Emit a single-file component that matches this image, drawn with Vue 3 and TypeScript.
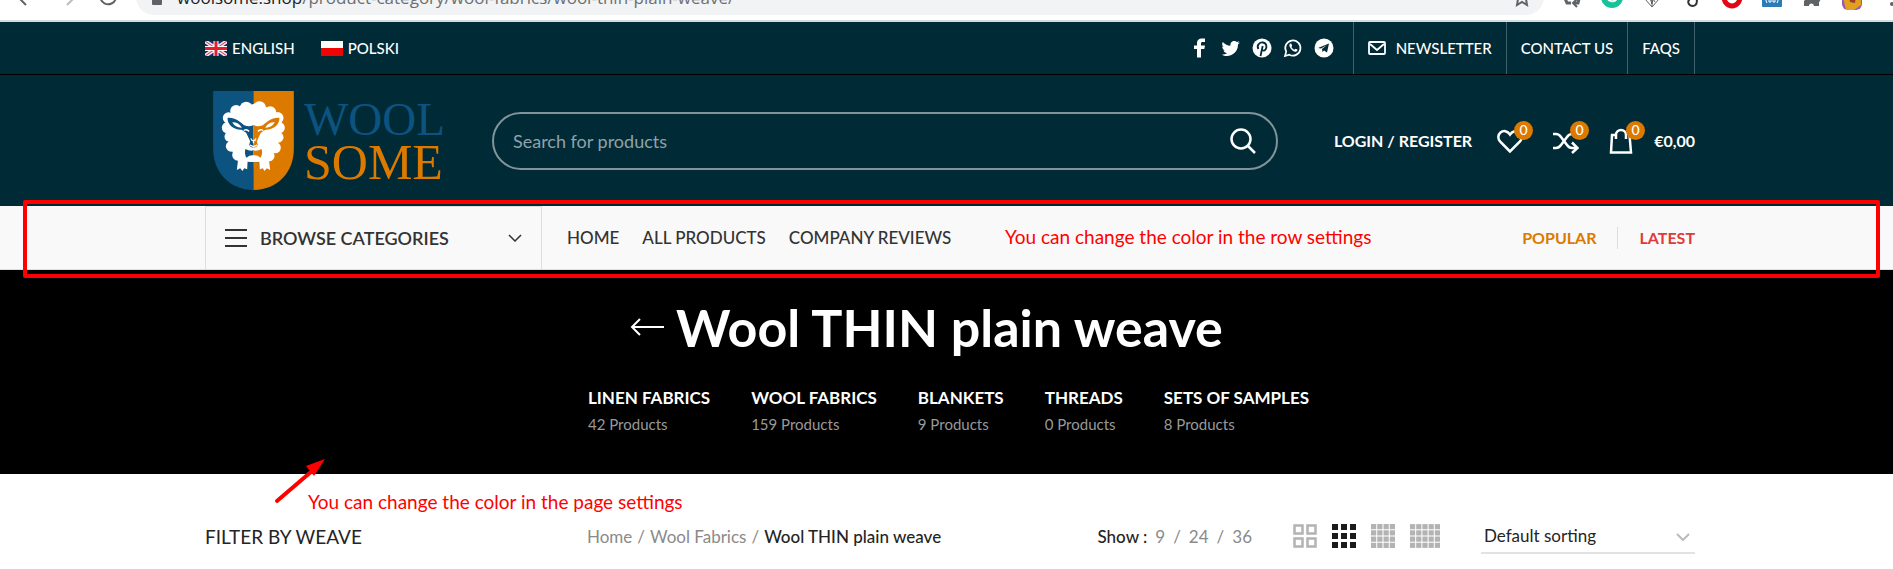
<script setup lang="ts">
import { ref } from 'vue'

interface Category {
  name: string
  count: number
}

const categories: Category[] = [
  { name: 'Linen Fabrics', count: 42 },
  { name: 'Wool Fabrics', count: 159 },
  { name: 'Blankets', count: 9 },
  { name: 'Threads', count: 0 },
  { name: 'Sets of samples', count: 8 },
]

const menu: string[] = ['Home', 'All products', 'Company reviews']
const perPage: number[] = [9, 24, 36]
const search = ref('')
const sorting = ref('default')

function cells(cols: number, rows: number, size: number, stepX: number, stepY: number) {
  const out: { x: number; y: number; w: number }[] = []
  for (let r = 0; r < rows; r++) {
    for (let c = 0; c < cols; c++) out.push({ x: c * stepX, y: r * stepY, w: size })
  }
  return out
}

const grid3 = cells(3, 3, 6, 9, 9)
const grid4 = cells(4, 4, 5, 6, 6)
const grid5 = cells(5, 4, 5, 6, 6)
</script>

<template>
  <div class="page">
    <div class="browser">
      <div class="browser-nav">
        <button type="button" aria-label="Back">
          <svg width="24" height="24" viewBox="0 0 24 24" fill="none" stroke="#5f6368" stroke-width="2"><path d="M20 12H5M12 4l-8 8 8 8" /></svg>
        </button>
        <button type="button" aria-label="Forward">
          <svg width="24" height="24" viewBox="0 0 24 24" fill="none" stroke="#babcbe" stroke-width="2"><path d="M4 12h15M12 4l8 8-8 8" /></svg>
        </button>
        <button type="button" aria-label="Reload">
          <svg width="24" height="24" viewBox="0 0 24 24" fill="none" stroke="#5f6368" stroke-width="2"><path d="M19 7a8 8 0 1 0 1 6M20 3v6h-6" /></svg>
        </button>
      </div>
      <div class="address">
        <svg width="12" height="18" viewBox="0 0 12 18"><rect x="1" y="6" width="10" height="11" rx="1" fill="#5f6368" /><path d="M3 7V4a3 3 0 0 1 6 0v3" fill="none" stroke="#5f6368" stroke-width="2" /></svg>
        <span class="url"><b>woolsome.shop</b>/product-category/wool-fabrics/wool-thin-plain-weave/</span>
        <button type="button" aria-label="Bookmark">
          <svg width="20" height="20" viewBox="0 0 20 20" fill="none" stroke="#5f6368" stroke-width="2"><path d="M10 2l2 5 6 1-4 4 1 6-5-3-5 3 1-6-4-4 6-1z" /></svg>
        </button>
      </div>
      <div class="extensions">
        <svg width="24" height="24" viewBox="0 0 24 24" fill="none" stroke="#5f6368" stroke-width="3"><path d="M4 11l3 7h4M20 10l-2 8h-4M8 8l4-6 4 6" /><path d="M17 14l-4 4 4 4" stroke-width="2" /></svg>
        <svg width="24" height="24" viewBox="0 0 24 24"><circle cx="12" cy="12" r="11" fill="#15c39a" /><path d="M16 8a5 5 0 1 0 1 5h-4" fill="none" stroke="#fff" stroke-width="2" /></svg>
        <svg width="24" height="24" viewBox="0 0 24 24" fill="none" stroke="#5f6368" stroke-width="1"><path d="M5 8v6l7 8 7-8V8M12 8v14M12 12l3 5" /><path d="M9 10h5l-2 9z" fill="#777" /></svg>
        <svg width="24" height="24" viewBox="0 0 24 24" fill="none" stroke="#333" stroke-width="2"><path d="M16 7c-5-2-8 2-5 5h3c4 1 4 8-1 9-5 0-6-5-3-7" /></svg>
        <svg width="24" height="24" viewBox="0 0 24 24" fill="none" stroke="#e30613" stroke-width="5"><ellipse cx="12" cy="12" rx="8" ry="9" /></svg>
        <svg width="24" height="24" viewBox="0 0 24 24"><rect x="2" y="2" width="20" height="20" rx="1" fill="#2b7bb9" /><path d="M6 12q-1 3 1 6M18 12q1 3-1 6M9 12v5h2v-5M13 12v5h2v-5" fill="none" stroke="#fff" stroke-width="1" /></svg>
        <svg width="24" height="24" viewBox="0 0 24 24"><path d="M4 7h5a3 3 0 0 1 5 0h5v5a3 3 0 0 1 0 5v4h-5a2 2 0 0 0-5 0H4v-5a3 3 0 0 0 0-5z" fill="#5f6368" /></svg>
        <svg width="24" height="28" viewBox="0 0 24 28"><rect x="2" y="0" width="20" height="27" rx="6" fill="#9b59b6" /><path d="M3 14l7-2 4 3 7-1v8l-7 5H6z" fill="#e0a020" /><path d="M9 12h7l-1 8-5-1z" fill="#9a3b22" /></svg>
        <svg width="24" height="24" viewBox="0 0 24 24" fill="#5f6368"><circle cx="12" cy="12" r="2" /><circle cx="12" cy="19" r="2" /></svg>
      </div>
    </div>

    <div class="topbar">
      <div class="wrap topbar-row">
        <nav class="languages" aria-label="Language">
          <a href="#en">
            <svg width="22" height="15" viewBox="0 0 22 15">
              <rect width="22" height="15" fill="#1a237b" />
              <path d="M0 0l22 15M22 0L0 15" stroke="#f3dfe8" stroke-width="4" />
              <path d="M0 0l22 15M22 0L0 15" stroke="#d8344c" stroke-width="1" />
              <path d="M11 0v15M0 7.500h22" stroke="#fff" stroke-width="5" />
              <path d="M11 0v15M0 7.500h22" stroke="#e2202c" stroke-width="3" />
            </svg>
            <span>English</span>
          </a>
          <a href="#pl">
            <svg width="22" height="15" viewBox="0 0 22 15"><rect width="22" height="8" fill="#fff" /><rect y="7" width="22" height="8" fill="#f00505" /></svg>
            <span>Polski</span>
          </a>
        </nav>
        <div class="social">
          <a href="#facebook" aria-label="Facebook"><svg width="20" height="20" viewBox="0 0 20 20" fill="#fff"><path d="M7 19.500V11H4V7.500h3V5c0-3 2-4.500 4.500-4.500H15V4h-2.500c-1 0-1.500.5-1.500 1.500v2h4l-.7 3.500H11v8.500z" /></svg></a>
          <a href="#twitter" aria-label="Twitter"><svg width="20" height="20" viewBox="0 0 20 20" fill="#fff"><path d="M19 4.500l-2 2C17 14 11 18 6 18c-2 0-4-.5-5-1.500 2 0 4-.5 5-1.500-2 0-3-1-3.500-2.500H4C2.500 12 1.200 10.500 1.200 8.500l1.500.5C1 8 .8 5.500 1.800 4 4 6.300 6.500 7.700 9.500 7.800 9 5 11 3 13.300 3c1 0 2 .4 2.600 1.100l2.300-.9-1.400 2z" /></svg></a>
          <a href="#pinterest" aria-label="Pinterest"><svg width="20" height="20" viewBox="0 0 20 20"><circle cx="10" cy="10" r="9.500" fill="#fff" /><path d="M8.500 18l2.200-10M6.500 11C4 7 8 4 11 4.500c4 .6 4 5 2.500 7-1.200 1.700-3 1.300-3.500.2" fill="none" stroke="#002a36" stroke-width="1.800" /></svg></a>
          <a href="#whatsapp" aria-label="WhatsApp"><svg width="20" height="20" viewBox="0 0 20 20"><path d="M2 18l1.200-4.300a7.600 7.600 0 1 1 3 3z" fill="none" stroke="#fff" stroke-width="1.700" /><path d="M7.200 5.500c-1.500 1-1 3 .7 5.200s4 3.500 5.500 2.800c1-.5 1.200-1.500 1-1.900l-2-.9-1 1.100c-1.500-.6-2.400-1.600-3-2.800l.8-1-.8-2.300z" fill="#fff" /></svg></a>
          <a href="#telegram" aria-label="Telegram"><svg width="20" height="20" viewBox="0 0 20 20"><circle cx="10" cy="10" r="9.500" fill="#fff" /><path d="M4 10l11-4.500-2 9-3-2-1.500 1.500-.5-3 5-4-6 3.500z" fill="#002a36" /></svg></a>
        </div>
        <nav class="top-links" aria-label="Service">
          <a href="#newsletter"><svg width="18" height="14" viewBox="0 0 18 14" fill="none" stroke="#fff" stroke-width="1.800"><rect x="1" y="1" width="16" height="12" rx="1" /><path d="M2 3l7 6 7-6" /></svg><span>Newsletter</span></a>
          <a href="#contact">Contact us</a>
          <a href="#faqs">FAQs</a>
        </nav>
      </div>
    </div>

    <header class="header">
      <div class="wrap header-row">
        <a class="logo" href="#home" aria-label="Woolsome">
          <svg width="81" height="99" viewBox="69 66 242 297">
            <path d="M69 66H190V363C119 363 69 310 69 240Z" fill="#0d5380" />
            <path d="M311 66H190V363C261 363 311 310 311 240Z" fill="#dc7a00" />
            <g fill="#fff">
              <path d="M130 120L190 105L250 120L272 160L262 230L236 276L190 280L144 276L116 230L108 160Z" />
              <circle cx="168" cy="117" r="19" /><circle cx="208" cy="117" r="20" />
              <circle cx="138" cy="126" r="18" /><circle cx="240" cy="130" r="18" />
              <circle cx="115" cy="147" r="17" /><circle cx="262" cy="147" r="18" />
              <circle cx="112" cy="176" r="17" /><circle cx="267" cy="176" r="17" />
              <circle cx="118" cy="203" r="15" /><circle cx="264" cy="205" r="16" />
              <circle cx="123" cy="232" r="16" /><circle cx="255" cy="236" r="17" />
              <circle cx="143" cy="258" r="17" /><circle cx="237" cy="261" r="16" />
              <path d="M145 262L140 303L150 298L157 306L162 298L171 301L173 264Z" />
              <path d="M235 262L240 303L230 298L223 306L218 298L209 301L207 264Z" />
            </g>
            <g fill="#0d5380">
              <path d="M112 147C132 144 150 158 162 169Q178 175 190 168V236Q181 236 177 228L180 217L168 191L154 182C132 183 112 169 112 147Z" />
              <path d="M166 240Q179 247 190 244V259Q180 257 169 266Q161 254 166 240Z" />
            </g>
            <g fill="#dc7a00">
              <path d="M268 147C248 144 230 158 218 169Q202 175 190 168V236Q199 236 203 228L200 217L212 191L226 182C248 183 268 169 268 147Z" />
              <path d="M214 240Q201 247 190 244V259Q200 257 211 266Q219 254 214 240Z" />
            </g>
            <path d="M126 160Q145 159 155 176Q136 177 126 160ZM254 160Q235 159 225 176Q244 177 254 160ZM160 183Q170 176 178 185L176 189Q168 181 161 187ZM220 183Q210 176 202 185L204 189Q212 181 219 187Z" fill="#fff" />
            <path d="M182 208Q184 215 190 215Q196 215 197 208M190 214V223M179 228L190 233L201 228" fill="none" stroke="#fff" stroke-width="4" />
            <path d="M174 282Q190 276 206 282L200 300H180Z" fill="#0d5380" />
            <path d="M190 279Q200 279 206 282L200 300H190Z" fill="#dc7a00" />
          </svg>
          <span class="wordmark"><span class="wool">WOOL</span><span class="some">SOME</span></span>
        </a>

        <form class="search" role="search" @submit.prevent>
          <input v-model="search" type="search" placeholder="Search for products" aria-label="Search for products" />
          <button type="submit" aria-label="Search">
            <svg width="26" height="26" viewBox="0 0 26 26" fill="none" stroke="#fff" stroke-width="2.500"><circle cx="11" cy="11" r="9.500" /><path d="M18 18l7 7" /></svg>
          </button>
        </form>

        <div class="account">
          <a class="login" href="#login">Login / Register</a>
          <a class="tool" href="#wishlist" aria-label="Wishlist">
            <svg width="26" height="26" viewBox="0 0 26 26" fill="none" stroke="#fff" stroke-width="2.500"><path d="M13 23.500L3 13.500C.5 10.500 1 6.500 3.500 4.500 6.500 2 10.500 3 13 6.500 15.500 3 19.500 2 22.500 4.500 25 6.500 25.500 10.500 23 13.500Z" /></svg>
            <span class="badge">0</span>
          </a>
          <a class="tool" href="#compare" aria-label="Compare">
            <svg width="26" height="26" viewBox="0 0 26 26" fill="none" stroke="#fff" stroke-width="2.500"><path d="M0 6h3q3 0 5 3l6 8q2 3 5 3h5M0 20h3q3 0 5-3l6-8q2-3 5-3h3M19 14.500l5.500 5.500-5.500 5" /></svg>
            <span class="badge">0</span>
          </a>
          <a class="tool cart" href="#cart">
            <svg width="24" height="26" viewBox="0 0 24 26" fill="none" stroke="#fff" stroke-width="2.500"><path d="M6 7H3L2 24.500H22L20.500 7M7 11V7a5 5 0 0 1 10 0v4" /></svg>
            <span class="badge">0</span>
            <span class="total">€0,00</span>
          </a>
        </div>
      </div>
    </header>

    <div class="mainbar">
      <div class="wrap mainbar-row">
        <button class="browse" type="button">
          <svg width="22" height="18" viewBox="0 0 22 18" stroke="#333" stroke-width="2"><path d="M0 1h22M0 9h22M0 17h22" /></svg>
          <span>Browse categories</span>
          <svg class="chev" width="14" height="8" viewBox="0 0 14 8" fill="none" stroke="#333" stroke-width="1.500"><path d="M1 1l6 6 6-6" /></svg>
        </button>
        <nav class="menu" aria-label="Main">
          <a v-for="item in menu" :key="item" href="#menu">{{ item }}</a>
        </nav>
        <nav class="promo" aria-label="Highlights">
          <a class="popular" href="#popular">Popular</a>
          <a class="latest" href="#latest">Latest</a>
        </nav>
      </div>
      <div class="mark-frame"></div>
      <p class="note note-row">You can change the color in the row settings</p>
    </div>

    <section class="hero">
      <div class="hero-title">
        <a href="#back" aria-label="Back to products">
          <svg width="34" height="18" viewBox="0 0 34 18" fill="none" stroke="#fff" stroke-width="2"><path d="M34 9H2M10 1L2 9l8 8" /></svg>
        </a>
        <h1>Wool THIN plain weave</h1>
      </div>
      <ul class="categories">
        <li v-for="c in categories" :key="c.name">
          <a href="#category"><span class="cat-name">{{ c.name }}</span><span class="cat-count">{{ c.count }} Products</span></a>
        </li>
      </ul>
    </section>

    <main class="wrap shop">
      <h2 class="filter">Filter by weave</h2>
      <nav class="crumbs" aria-label="Breadcrumb">
        <a href="#home">Home</a><span>/</span><a href="#wool">Wool Fabrics</a><span>/</span><strong>Wool THIN plain weave</strong>
      </nav>
      <div class="tools">
        <div class="show">
          <strong>Show :</strong>
          <template v-for="(n, i) in perPage" :key="n"><span v-if="i">/</span><a href="#show">{{ n }}</a></template>
        </div>
        <div class="views">
          <button type="button" aria-label="Two columns">
            <svg width="24" height="24" viewBox="0 0 24 24" fill="none" stroke="#b3b3b3" stroke-width="2.500"><path d="M1.500 1.500h8v8h-8zM14.500 1.500h8v8h-8zM1.500 14.500h8v8h-8zM14.500 14.500h8v8h-8z" /></svg>
          </button>
          <button type="button" aria-label="Three columns">
            <svg width="24" height="24" viewBox="0 0 24 24" fill="#1b1b1b"><rect v-for="(q, i) in grid3" :key="i" :x="q.x" :y="q.y" :width="q.w" :height="q.w" /></svg>
          </button>
          <button type="button" aria-label="Four columns">
            <svg width="24" height="24" viewBox="0 0 23 23" fill="#b3b3b3"><rect v-for="(q, i) in grid4" :key="i" :x="q.x" :y="q.y" :width="q.w" :height="q.w" /></svg>
          </button>
          <button type="button" aria-label="Five columns">
            <svg width="30" height="24" viewBox="0 0 29 23" fill="#b3b3b3"><rect v-for="(q, i) in grid5" :key="i" :x="q.x" :y="q.y" :width="q.w" :height="q.w" /></svg>
          </button>
        </div>
        <div class="sort">
          <select v-model="sorting" aria-label="Sort products">
            <option value="default">Default sorting</option>
            <option value="price">Sort by price</option>
          </select>
          <svg width="14" height="8" viewBox="0 0 14 8" fill="none" stroke="#bbb" stroke-width="2"><path d="M1 1l6 6 6-6" /></svg>
        </div>
      </div>
      <svg class="mark-arrow" width="52" height="46" viewBox="0 0 52 46"><path d="M3 43L38 13" stroke="#f00" stroke-width="4" stroke-linecap="round" /><path d="M51 1L32 8L40 18Z" fill="#f00" /></svg>
      <p class="note note-page">You can change the color in the page settings</p>
    </main>
  </div>
</template>

<style>
body {
  margin: 0;
  background: #fff;
}
</style>

<style scoped>
.page {
  font-family: Lato, "Liberation Sans", sans-serif;
  font-size: 16px;
  color: #242424;
  overflow: hidden;
}
.page * {
  box-sizing: border-box;
}
a {
  color: inherit;
  text-decoration: none;
}
button {
  padding: 0;
  border: 0;
  background: none;
  font: inherit;
  color: inherit;
  cursor: pointer;
}
svg {
  display: block;
  flex: none;
}
h1,
h2,
p,
ul {
  margin: 0;
  padding: 0;
}
.wrap {
  max-width: 1497px;
  margin: 0 auto;
  padding-left: 7px;
}

.browser {
  display: flex;
  align-items: flex-end;
  height: 22px;
  padding-bottom: 5px;
  background: #fff;
  border-bottom: 2px solid #d5dcde;
  overflow: hidden;
}
.browser-nav {
  display: flex;
  align-items: center;
  gap: 17px;
  width: 136px;
  height: 36px;
  padding-left: 14px;
  flex: none;
}
.address {
  display: flex;
  align-items: center;
  flex: 1;
  height: 36px;
  padding: 0 12px 0 15px;
  background: #f1f3f4;
  border-radius: 18px;
}
.url {
  flex: 1;
  margin-left: 14px;
  font-family: "Open Sans", "Noto Sans", sans-serif;
  font-size: 17px;
  color: #6b6f73;
  white-space: nowrap;
}
.url b {
  font-weight: 400;
  color: #202124;
}
.extensions {
  display: flex;
  align-items: center;
  gap: 16px;
  height: 36px;
  margin-left: 16px;
  margin-right: -11px;
}

.topbar {
  background: #002a36;
  border-bottom: 1px solid #000;
  color: #fff;
  font-size: 15px;
  font-weight: 500;
  text-transform: uppercase;
}
.topbar-row {
  display: flex;
  align-items: center;
  height: 52px;
}
.languages {
  display: flex;
  gap: 26px;
  flex: 1;
}
.languages a {
  display: flex;
  align-items: center;
  gap: 5px;
}
.social {
  display: flex;
  gap: 11px;
  margin-right: 19px;
}
.top-links {
  display: flex;
  height: 100%;
  border-left: 1px solid #40606a;
}
.top-links a {
  display: flex;
  align-items: center;
  gap: 10px;
  padding: 0 14px;
  border-right: 1px solid #40606a;
}

.header {
  background: #002a36;
  color: #fff;
}
.header-row {
  display: flex;
  align-items: center;
  height: 131px;
}
.logo {
  display: flex;
  align-items: center;
  gap: 10px;
  width: 287px;
  padding-left: 8px;
  flex: none;
}
.wordmark {
  display: grid;
  font-family: "Liberation Serif", serif;
  line-height: 43px;
}
.wool {
  font-size: 47px;
  color: #0d5380;
}
.some {
  font-size: 50px;
  color: #dc7a00;
}
.search {
  display: flex;
  align-items: center;
  flex: 1;
  height: 58px;
  padding: 0 20px 0 19px;
  border: 2px solid #80949a;
  border-radius: 29px;
}
.search input {
  flex: 1;
  min-width: 0;
  padding: 0;
  border: 0;
  outline: 0;
  background: none;
  font: 18px Lato, sans-serif;
  color: #fff;
}
.search input::placeholder {
  color: #90a2a8;
  opacity: 1;
}
.account {
  display: flex;
  align-items: center;
  margin-left: 56px;
  font-size: 16px;
  font-weight: 700;
}
.login {
  text-transform: uppercase;
}
.tool {
  position: relative;
  display: flex;
  align-items: center;
  margin-left: 25px;
}
.tool + .tool {
  margin-left: 30px;
}
.badge {
  position: absolute;
  left: 17px;
  top: -7px;
  width: 19px;
  height: 19px;
  border-radius: 50%;
  background: #dc7a00;
  font-size: 14px;
  font-weight: 500;
  line-height: 18px;
  text-align: center;
}
.total {
  margin-left: 21px;
}

.mainbar {
  position: relative;
  background: #f9f9f9;
  border-bottom: 1px solid #ddd;
}
.mainbar-row {
  display: flex;
  align-items: center;
  height: 63px;
}
.browse {
  display: flex;
  align-items: center;
  width: 337px;
  height: 100%;
  padding: 0 19px;
  border: 1px solid #ddd;
  border-bottom: 0;
  font-size: 18px;
  font-weight: 600;
  text-transform: uppercase;
  color: #333;
}
.browse span {
  margin-left: 13px;
}
.chev {
  margin-left: auto;
}
.menu {
  display: flex;
  gap: 23px;
  flex: 1;
  padding-left: 25px;
  font-size: 17px;
  font-weight: 500;
  text-transform: uppercase;
  color: #333;
}
.promo {
  display: flex;
  align-items: center;
  font-size: 16px;
  font-weight: 700;
  line-height: 22px;
  text-transform: uppercase;
}
.popular {
  padding-right: 20px;
  border-right: 1px solid #ddd;
  color: #dc7a00;
}
.latest {
  padding-left: 22px;
  color: #e03a3a;
}
.mark-frame {
  position: absolute;
  z-index: 1;
  left: 23px;
  right: 13px;
  top: -6px;
  bottom: -9px;
  border: 4px solid #f00;
  border-radius: 2px;
  pointer-events: none;
}
.note {
  position: absolute;
  font-size: 19px;
  font-weight: 400;
  line-height: 24px;
  color: #f00;
  white-space: nowrap;
}
.note-row {
  left: 1005px;
  top: 19px;
}

.hero {
  padding: 23px 0 38px;
  background: #000;
  color: #fff;
}
.hero-title {
  display: flex;
  align-items: center;
  justify-content: center;
  gap: 12px;
  padding-right: 40px;
}
h1 {
  font-size: 52px;
  font-weight: 700;
  line-height: 68px;
}
.categories {
  display: flex;
  justify-content: center;
  gap: 41px;
  margin-top: 23px;
  padding-left: 4px;
  list-style: none;
}
.categories a {
  display: grid;
}
.cat-name {
  font-size: 17px;
  font-weight: 700;
  line-height: 28px;
  text-transform: uppercase;
}
.cat-count {
  font-size: 15px;
  line-height: 24px;
  color: #999;
}

.shop {
  position: relative;
  display: flex;
  align-items: center;
  padding-top: 44px;
}
.filter {
  width: 382px;
  font-size: 19px;
  font-weight: 400;
  text-transform: uppercase;
}
.crumbs {
  display: flex;
  gap: 5px;
  flex: 1;
  font-size: 17px;
  color: #8a8a8a;
}
.crumbs strong {
  font-weight: 500;
  color: #242424;
}
.tools {
  display: flex;
  align-items: center;
}
.show {
  display: flex;
  gap: 8px;
  margin-right: 41px;
  font-size: 17px;
  color: #8a8a8a;
}
.show strong {
  font-weight: 500;
  color: #242424;
}
.views {
  display: flex;
  gap: 15px;
  margin-right: 41px;
}
.sort {
  position: relative;
  width: 214px;
}
.sort select {
  width: 100%;
  height: 36px;
  padding: 0 3px;
  appearance: none;
  border: 0;
  border-bottom: 2px solid #e2e2e2;
  background: none;
  font: 17px Lato, sans-serif;
  color: #242424;
}
.sort svg {
  position: absolute;
  right: 5px;
  top: 15px;
  pointer-events: none;
}
.mark-arrow {
  position: absolute;
  left: 76px;
  top: -16px;
}
.note-page {
  left: 110px;
  top: 16px;
}
</style>
